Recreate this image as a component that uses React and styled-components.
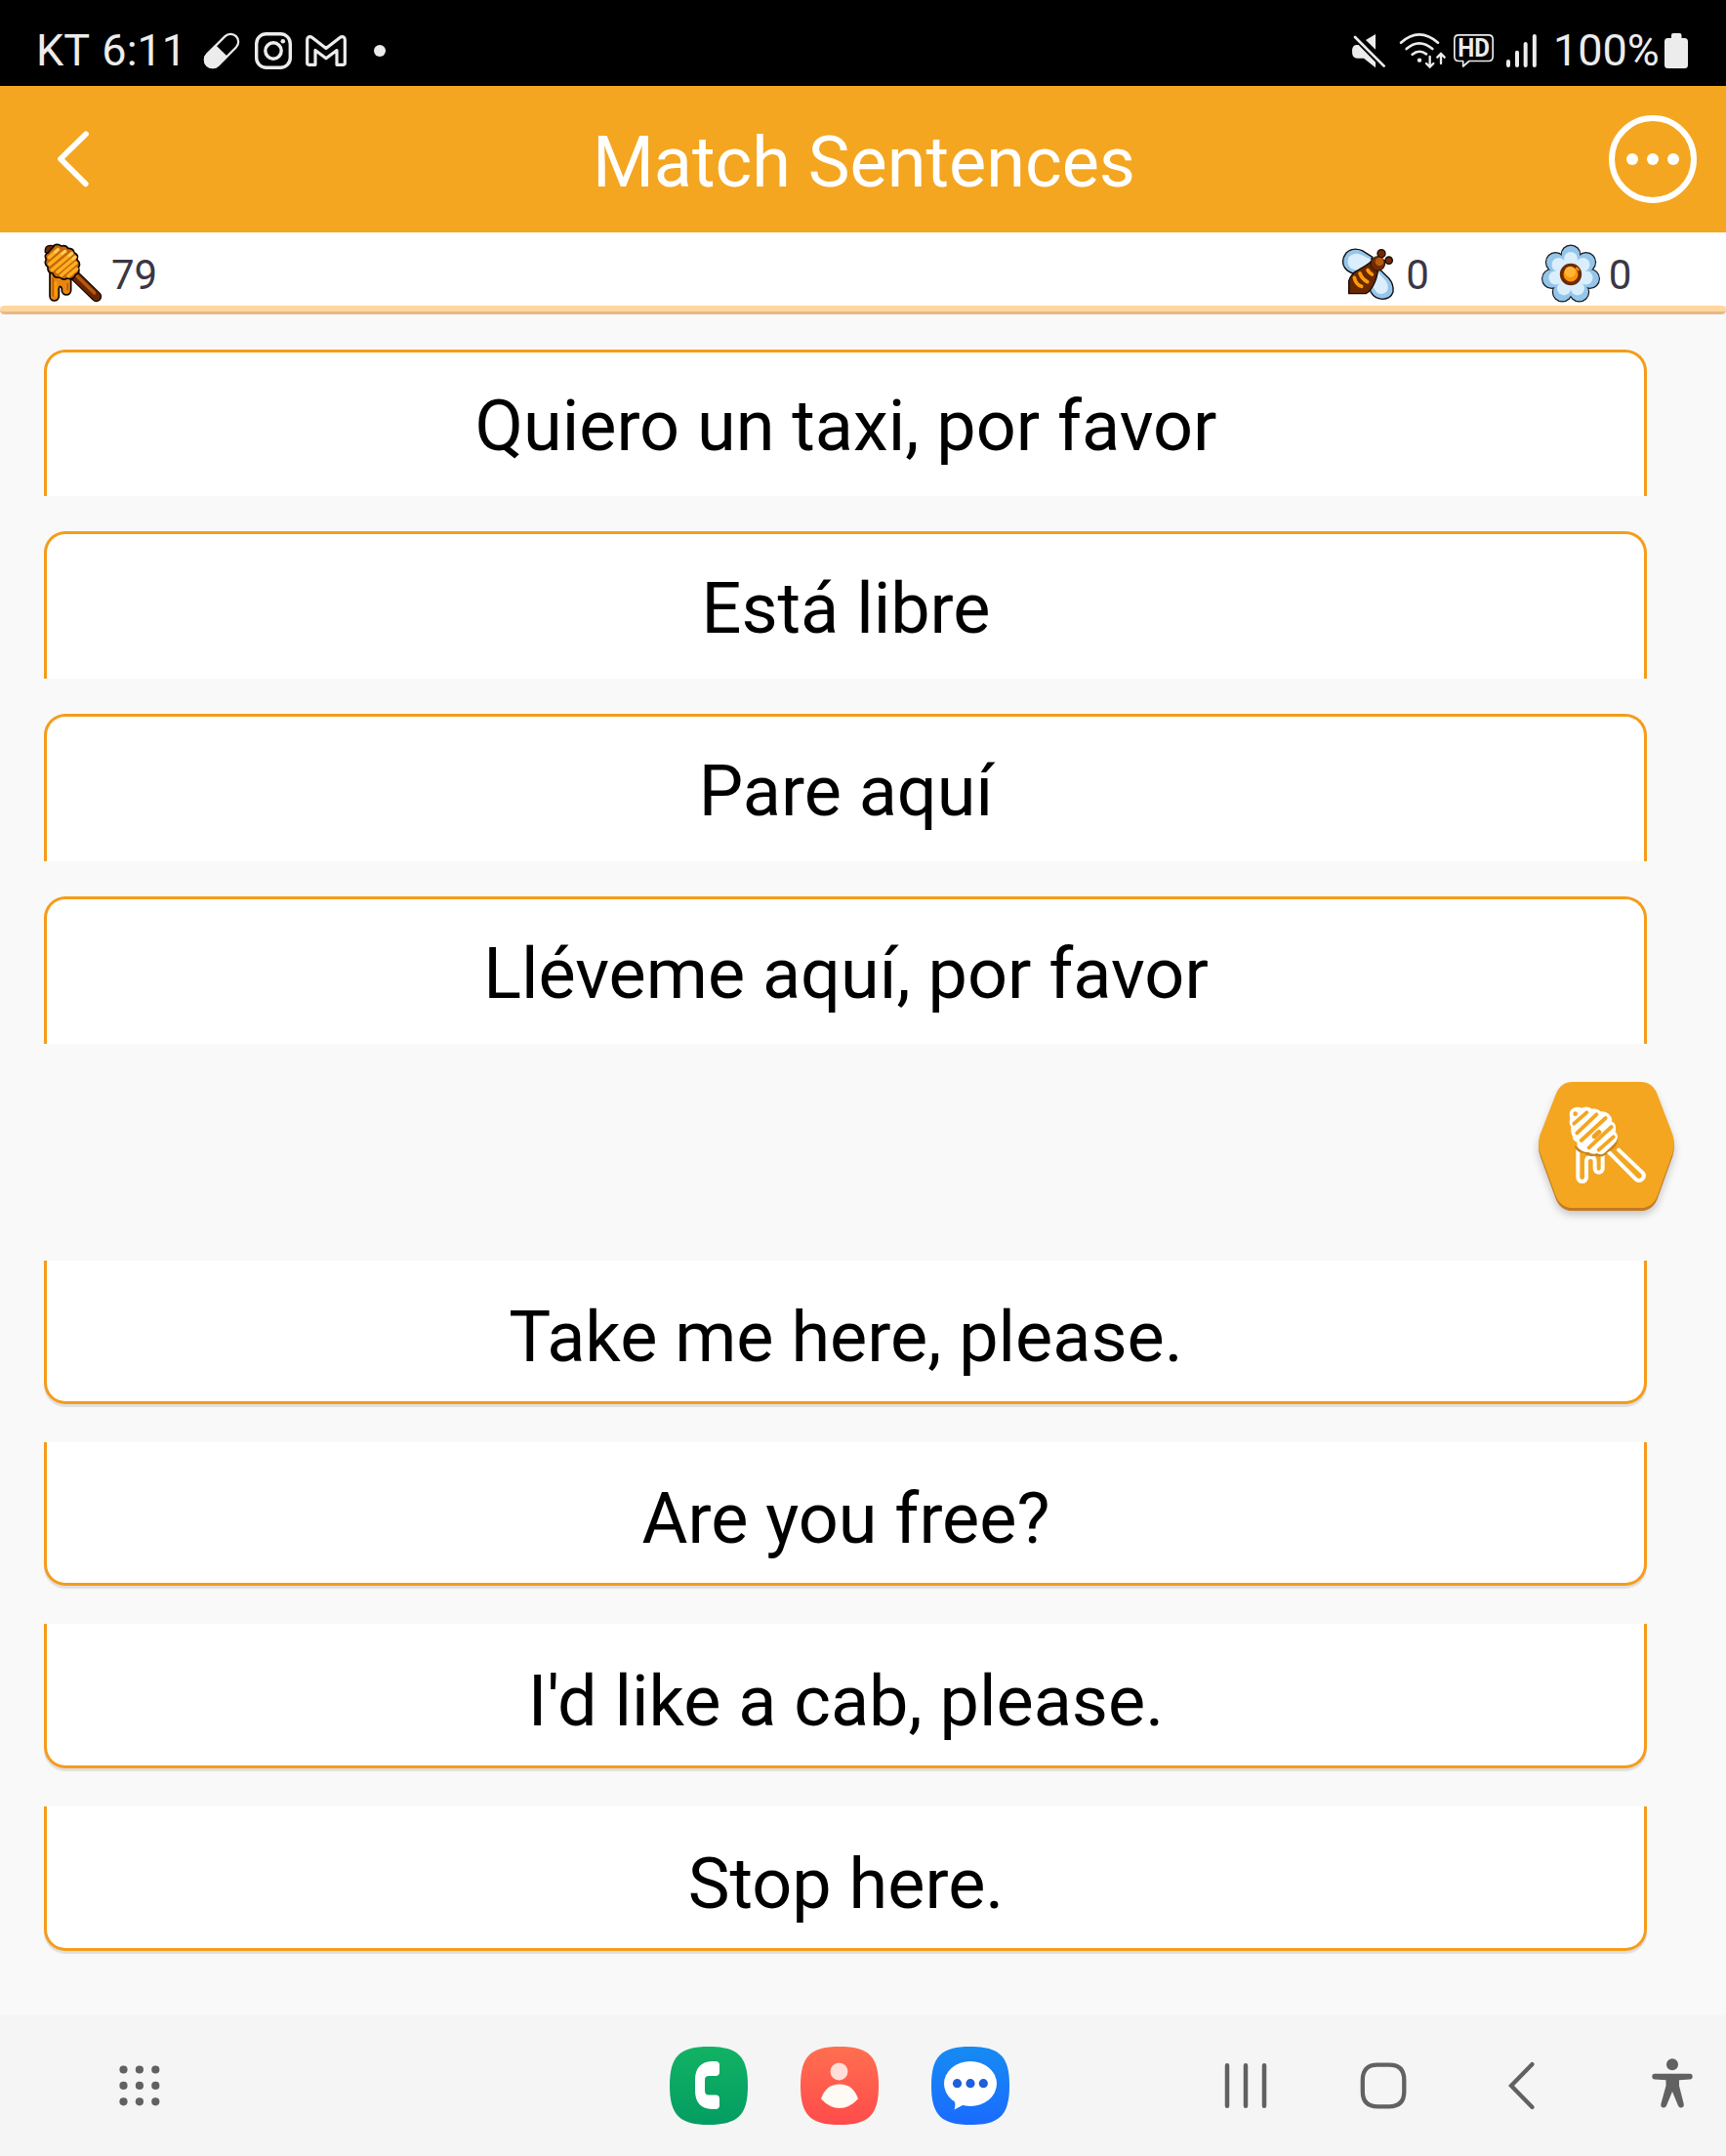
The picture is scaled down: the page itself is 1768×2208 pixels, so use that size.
import React from 'react'
import styled, { createGlobalStyle } from 'styled-components'

const GlobalStyle = createGlobalStyle`
* { box-sizing: border-box; }
body {
  margin: 0;
  background: #f9f9f9;
  font-family: Roboto, "Noto Sans", sans-serif;
}
svg { display: block; flex: none; }
`
const Screen = styled.div`
display: flex;
flex-direction: column;
width: 1768px;
height: 2208px;
overflow: hidden;
background: #f9f9f9;`
const StatusBar = styled.div`
display: flex;
justify-content: space-between;
height: 88px;
padding: 16px 39px 0 37px;
background: #000;
color: #ececec;`
const StatusSide = styled.div`
display: flex;
align-items: center;
height: 72px;`
const StatusText = styled.span`
width: ${({ $width }) => $width}px;
margin-left: ${({ $left }) => $left || 0}px;
font-size: 45px;
line-height: 72px;
word-spacing: 2px;
white-space: nowrap;`
const Icon = styled.svg`
width: ${({ $w }) => $w}px;
height: ${({ $h }) => $h}px;
margin-left: ${({ $left }) => $left || 0}px;
overflow: visible;`
const Header = styled.header`
display: grid;
grid-template-columns: 150px 1fr 150px;
align-items: center;
height: 150px;
background: #f4a620;
color: #fff;`
const IconButton = styled.button`
display: flex;
align-items: center;
justify-content: ${({ $end }) => ($end ? 'flex-end' : 'flex-start')};
height: 150px;
border: 0;
padding: 0 ${({ $end }) => ($end ? 30 : 0)}px 0 ${({ $end }) => ($end ? 0 : 57)}px;
background: none;
color: inherit;`
const Title = styled.h1`
margin: 8px 0 0;
padding-left: 2px;
font-size: 72px;
font-weight: 400;
line-height: 84px;
text-align: center;`
const ScoreRow = styled.div`
display: flex;
align-items: flex-start;
height: 75px;
padding: 12px 98px 0 45px;
background: #fff;`
const Score = styled.div`
display: flex;
align-items: center;
height: 60px;
margin-left: ${({ $left }) => $left || 0}px;`
const ScoreValue = styled.span`
margin: 3px 0 0 ${({ $gap }) => $gap}px;
color: #3b3645;
font-size: 42px;
line-height: 50px;`
const Progress = styled.div`
height: 9px;
border-radius: 5px;
border-bottom: 3px solid #e4b98b;
background: #ffd79c;`
const Cards = styled.div`
display: flex;
flex-direction: column;
gap: ${({ $gap }) => $gap}px;
margin: ${({ $top }) => $top}px 81px 0 45px;`
const Card = styled.div`
display: flex;
align-items: center;
justify-content: center;
height: ${({ $height }) => $height}px;
padding: ${({ $pad }) => $pad}px 0 0 1px;
border: 3px solid #f59c1a;
background: #fff;
color: #000;
font-size: 72px;
line-height: 84px;`
const QuestionCard = styled(Card)`
border-bottom: 0;
border-radius: 22px 22px 0 0;`
const AnswerCard = styled(Card)`
border-top: 0;
border-radius: 0 0 22px 22px;
box-shadow: 0 3px 1px rgba(0, 0, 0, 0.1);`
const HintRow = styled.div`
display: flex;
justify-content: flex-end;
height: 222px;
padding-top: 11px;`
const NavBar = styled.nav`
display: grid;
grid-template-columns: 686px 348px 1fr;
align-items: center;
height: 144px;
margin-top: auto;
background: #f5f5f5;
color: #616161;`
const NavGroup = styled.div`
display: flex;
align-items: center;
padding-left: ${({ $pad }) => $pad || 0}px;
gap: ${({ $gap }) => $gap || 0}px;`

const questions = [
    { text: 'Quiero un taxi, por favor', height: 150, pad: 4 },
    { text: 'Está libre', height: 151, pad: 6 },
    { text: 'Pare aquí', height: 151, pad: 6 },
    { text: 'Lléveme aquí, por favor', height: 151, pad: 6 },
]
const answers = [
    { text: 'Take me here, please.', height: 147, pad: 13 },
    { text: 'Are you free?', height: 147, pad: 13 },
    { text: "I'd like a cab, please.", height: 148, pad: 14 },
    { text: 'Stop here.', height: 148, pad: 14 },
]

const PillIcon = () => (
    <Icon $w={38} $h={38} viewBox="0 0 38 38">
        <g transform="rotate(-45 19 19)">
            <rect x="-2" y="11" width="42" height="16" rx="8" fill="none" stroke="currentColor" strokeWidth="2.2" />
            <path d="M19 10H6a9 9 0 0 0 0 18h13z" fill="currentColor" />
        </g>
    </Icon>
)

const InstagramIcon = () => (
    <Icon $w={38} $h={38} $left={15} viewBox="0 0 38 38" fill="none" stroke="currentColor" strokeWidth="3.4">
        <rect x="1.7" y="1.7" width="34.6" height="34.6" rx="10" />
        <circle cx="19" cy="19" r="8.2" />
        <circle cx="28.8" cy="9.2" r="2.3" fill="currentColor" stroke="none" />
    </Icon>
)

const GmailIcon = () => (
    <Icon $w={42} $h={32} $left={14} viewBox="0 0 42 32" fill="none" stroke="currentColor" strokeWidth="3.2" strokeLinejoin="round">
        <path d="M1.7 4.6C1.7 1.8 4.6.7 6.8 2.4L21 13.4 35.2 2.4C37.4.7 40.3 1.8 40.3 4.6V28.6Q40.3 30.3 38.6 30.3H32V15.5L21 23.8 10 15.5V30.3H3.4Q1.7 30.3 1.7 28.6Z" />
    </Icon>
)

const MuteIcon = () => (
    <Icon $w={34} $h={35} viewBox="132 104 102 105" fill="currentColor">
        <path d="M145 137H152L204 190V207L168 178H148Q132 178 132 157Q132 137 145 137Z" />
        <path d="M204 104V151L174 122Z" />
        <path d="M141 113L230 202" stroke="currentColor" strokeWidth="8" strokeLinecap="round" />
    </Icon>
)

const WifiIcon = () => (
    <Icon $w={47} $h={36} $left={15} viewBox="279 99 141 108" fill="none" stroke="currentColor" strokeWidth="8" strokeLinecap="round">
        <path d="M282 128Q338 78 396 128" />
        <path d="M299 147Q338 113 379 147" />
        <path d="M317 164Q338 147 360 163" />
        <circle cx="339" cy="182" r="6.5" fill="currentColor" stroke="none" />
        <path d="M371 171V201M360 192L371 203 382 192M405 192V163M394 173L405 162 416 173" strokeWidth="7" />
    </Icon>
)

const HdIcon = () => (
    <Icon $w={41} $h={34} $left={8} viewBox="444 107 123 102">
        <path d="M460 109.500H551Q564.500 109.500 564.500 123V176Q564.500 189.500 551 189.500H492L473 206V189.500H460Q446.500 189.500 446.500 176V123Q446.500 109.500 460 109.500Z" fill="none" stroke="currentColor" strokeWidth="5" strokeLinejoin="round" />
        <text x="505.500" y="177" textAnchor="middle" fontSize="75" fontWeight="700" textLength="98" lengthAdjust="spacingAndGlyphs" fill="currentColor">HD</text>
    </Icon>
)

const SignalIcon = () => (
    <Icon $w={31} $h={34} $left={13} viewBox="608 104 93 102" fill="none" stroke="currentColor" strokeWidth="12" strokeLinecap="round">
        <path d="M614 188V200M641 160V200M667 134V200M694.500 110V200" />
    </Icon>
)

const BatteryIcon = () => (
    <Icon $w={24} $h={36} $left={5} viewBox="0 0 24 36" fill="currentColor">
        <path d="M7 2Q7 0 9 0H15.500Q17.500 0 17.500 2V5H20.500Q24 5 24 8.500V32.500Q24 36 20.500 36H3.500Q0 36 0 32.500V8.500Q0 5 3.500 5H7Z" />
    </Icon>
)

const DipperIcon = () => (
    <Icon $w={60} $h={60} viewBox="135 750 180 180" fill="none" strokeLinecap="round" strokeLinejoin="round">
        <path d="M153 835V910A14 14 0 0 0 181 910V886Q184 874 190 886V892A14 14 0 0 0 218 892V850Z" fill="#e8860c" stroke="#0c0400" strokeWidth="5" />
        <path d="M163 855V909M208 872V890" stroke="#b95c0c" strokeWidth="5" />
        <path d="M171 868V907" stroke="#ff9d0e" strokeWidth="8" />
        <path d="M228 845L296 911" stroke="#0c0400" strokeWidth="33" />
        <path d="M228 845L296 911" stroke="#682600" strokeWidth="26" />
        <path d="M235 846L290 900" stroke="#b85812" strokeWidth="10" />
        <path d="M164 755Q178 747 188 756Q203 752 209 763Q226 762 228 776Q243 783 236 797Q250 810 241 822Q247 839 232 844Q224 862 207 855Q193 863 184 852Q166 856 162 840Q145 839 147 820Q134 811 142 797Q134 782 148 776Q152 763 164 755Z" fill="#c5680d" stroke="#0c0400" strokeWidth="5" />
        <path d="M139 775Q137 753 156 754L166 757 146 778Z" fill="#6b2b05" stroke="#0c0400" strokeWidth="4" />
        <path d="M151 791L178 767M152 812L200 772M160 829L221 778M177 836L231 790M188 846L233 808M210 848L236 826" stroke="#ffb01c" strokeWidth="10.5" />
        <path d="M170 774L178 767M191 779L200 772M213 785L221 778M225 795L231 790" stroke="#ffcf62" strokeWidth="8" />
    </Icon>
)

const BeeIcon = () => (
    <Icon $w={60} $h={60} viewBox="90 750 180 180" strokeLinejoin="round" strokeLinecap="round">
        <g stroke="#0b0b10" strokeWidth="4" fill="#95c5e9">
            <path d="M198 790L166 770Q137 758 117 777Q99 800 112 822Q122 836 141 841L172 828Z" />
            <path d="M212 820L248 855Q264 874 261 897Q254 918 228 919Q204 917 193 898L180 865Z" />
        </g>
        <path d="M194 797L162 782Q139 774 125 790Q115 810 131 824L150 832 178 822Z" fill="#daeefc" />
        <path d="M211 832L239 863Q249 878 243 894Q231 909 212 900L196 878Z" fill="#daeefc" />
        <path d="M193 805L215 825Q212 856 199 879Q187 899 177 902H125V863Q133 838 156 828Q174 819 193 805Z" fill="#682800" stroke="#120500" strokeWidth="4" />
        <g fill="none" stroke="#ff9a0b" strokeWidth="11">
            <path d="M142 853Q146 874 164 880" />
            <path d="M159 840Q166 858 182 866" />
            <path d="M183 830Q187 838 196 843" />
        </g>
        <path d="M222 796L226 779M229 804L247 800" stroke="#2b0f00" strokeWidth="7" />
        <circle cx="225" cy="779" r="12" fill="#702b04" stroke="#160600" strokeWidth="4" />
        <circle cx="248" cy="800" r="11" fill="#702b04" stroke="#160600" strokeWidth="4" />
        <circle cx="214" cy="810" r="22" fill="#702b04" stroke="#2b0f00" strokeWidth="3" />
        <circle cx="219" cy="804" r="13" fill="#b75a10" />
    </Icon>
)

const petals = [0, 1, 2, 3, 4, 5, 6].map(i => {
    const a = (i * 2 * Math.PI) / 7 - Math.PI / 2
    return { x: 807 + 60 * Math.cos(a), y: 843 + 60 * Math.sin(a), ix: 807 + 48 * Math.cos(a), iy: 843 + 48 * Math.sin(a) }
})

const FlowerIcon = () => (
    <Icon $w={60} $h={60} viewBox="717 750 180 180">
        {petals.map((p, i) => <circle key={i} cx={p.x} cy={p.y} r="31.500" fill="#101820" />)}
        {petals.map((p, i) => <circle key={i} cx={p.x} cy={p.y} r="28" fill="#95c5e9" />)}
        <circle cx="807" cy="843" r="52" fill="#95c5e9" />
        {petals.map((p, i) => <circle key={i} cx={p.ix} cy={p.iy} r="21" fill="#daeefc" />)}
        <circle cx="807" cy="843" r="46" fill="#daeefc" />
        <circle cx="807" cy="843" r="28" fill="#ff9208" stroke="#6b2a03" strokeWidth="11" />
        <circle cx="805" cy="835" r="17" fill="#ffb437" />
        <path d="M823 822L832 831" stroke="#ff9208" strokeWidth="6" />
    </Icon>
)

const HintButton = () => (
    <Icon $w={228} $h={180} viewBox="0 0 684 540" fill="none" strokeLinecap="round" strokeLinejoin="round">
        <defs>
            <filter id="soft" x="-20%" y="-20%" width="140%" height="150%">
                <feGaussianBlur stdDeviation="12" />
            </filter>
            <path id="hex" d="M212 84H422Q458 84 473 122L520 245Q529 274 520 303L473 434Q458 471 422 471H212Q176 471 161 434L113 303Q103 274 113 245L161 122Q176 84 212 84Z" />
        </defs>
        <use href="#hex" y="20" fill="#000" opacity="0.22" filter="url(#soft)" />
        <use href="#hex" y="9" fill="#c17a22" />
        <use href="#hex" fill="#f4a620" />
        <g stroke="#fff" strokeWidth="12">
            <path d="M229 284V377A13 13 0 0 0 255 377V327Q255 315 268 315Q281 315 281 327V350A12 12 0 0 0 305 350V306" />
            <path d="M318 294L409 385A15 15 0 0 0 429 364L354 293" />
        </g>
        <path d="M223 284Q232 300 250 299Q265 313 282 306Q306 316 318 297Q345 285 348 262" stroke="#c58422" strokeWidth="8" />
        <path d="M213 222Q205 208 210 196Q204 174 218 168Q232 164 240 170Q257 160 270 172Q284 167 298 180Q313 178 323 189Q331 199 328 209Q340 213 340 224Q342 231 338 240Q348 246 345 257Q344 264 337 270L309 297Q299 306 288 297Q276 305 264 294Q247 297 238 286Q229 278 232 266Q215 260 218 251Q211 240 213 222Z" fill="#fff" stroke="#fff" strokeWidth="10" />
        <circle cx="221" cy="182" r="7" fill="#f4a620" />
        <g stroke="#f4a620" strokeWidth="11.500">
            <path d="M217 212L256 178" />
            <path d="M226 241L286 184" />
            <path d="M239 264L314 195" />
            <path d="M263 286L332 222" />
            <path d="M293 293L338 253" />
            <path d="M280 251L293 239" strokeWidth="16" />
        </g>
        <path d="M276 256L297 235" stroke="#c58422" strokeWidth="1.500" />
    </Icon>
)

const squircle = 'M40 0C70 0 80 10 80 40S70 80 40 80 0 70 0 40 10 0 40 0Z'

const AppIcon = ({ id, from, to, children }) => (
    <Icon $w={80} $h={80} viewBox="0 0 80 80">
        <defs>
            <linearGradient id={id} x1="0" y1="0" x2="0" y2="1">
                <stop offset="0" stopColor={from} />
                <stop offset="1" stopColor={to} />
            </linearGradient>
        </defs>
        <path d={squircle} fill={`url(#${id})`} />
        {children}
    </Icon>
)

export default function App() {
    return (
        <Screen>
            <GlobalStyle />
            <StatusBar>
                <StatusSide>
                    <StatusText $width={171}>KT 6:11</StatusText>
                    <PillIcon />
                    <InstagramIcon />
                    <GmailIcon />
                    <Icon $w={12} $h={12} $left={28} viewBox="0 0 12 12">
                        <circle cx="6" cy="6" r="6" fill="currentColor" />
                    </Icon>
                </StatusSide>
                <StatusSide>
                    <MuteIcon />
                    <WifiIcon />
                    <HdIcon />
                    <SignalIcon />
                    <StatusText $width={109} $left={17}>100%</StatusText>
                    <BatteryIcon />
                </StatusSide>
            </StatusBar>
            <Header>
                <IconButton aria-label="Back">
                    <Icon $w={36} $h={60} viewBox="0 0 36 60" fill="none" stroke="currentColor" strokeWidth="5.800" strokeLinecap="round" strokeLinejoin="round">
                        <path d="M31 4.300L5 29.700 30.700 55.300" />
                    </Icon>
                </IconButton>
                <Title>Match Sentences</Title>
                <IconButton $end aria-label="Menu">
                    <Icon $w={90} $h={90} viewBox="0 0 90 90" fill="currentColor">
                        <circle cx="45" cy="45" r="42" fill="none" stroke="currentColor" strokeWidth="6" />
                        <circle cx="24" cy="45" r="6" />
                        <circle cx="45" cy="45" r="6" />
                        <circle cx="66" cy="45" r="6" />
                    </Icon>
                </IconButton>
            </Header>
            <ScoreRow>
                <Score>
                    <DipperIcon />
                    <ScoreValue $gap={9}>79</ScoreValue>
                </Score>
                <Score $left={1209}>
                    <BeeIcon />
                    <ScoreValue $gap={10}>0</ScoreValue>
                </Score>
                <Score $left={115}>
                    <FlowerIcon />
                    <ScoreValue $gap={9}>0</ScoreValue>
                </Score>
            </ScoreRow>
            <Progress />
            <Cards $top={36} $gap={36}>
                {questions.map(q => <QuestionCard key={q.text} $height={q.height} $pad={q.pad}>{q.text}</QuestionCard>)}
            </Cards>
            <HintRow>
                <HintButton />
            </HintRow>
            <Cards $top={0} $gap={39}>
                {answers.map(a => <AnswerCard key={a.text} $height={a.height} $pad={a.pad}>{a.text}</AnswerCard>)}
            </Cards>
            <NavBar>
                <NavGroup $pad={119}>
                    <Icon $w={48} $h={48} viewBox="0 0 48 48" fill="currentColor">
                        {[7.5, 23.9, 40.3].map(y => [7.5, 23.9, 40.3].map(x => <circle key={`${x}-${y}`} cx={x} cy={y} r="4.100" />))}
                    </Icon>
                </NavGroup>
                <NavGroup $gap={54}>
                    <AppIcon id="phone" from="#12b264" to="#039d62">
                        <path d="M43 15H47Q51 15 51 19V26Q51 30 47 30H40Q36 30 36 34V45Q36 49.500 40 49.500H47Q51 49.500 51 53.500V60Q51 64 47 64H43Q26 63 26 45V34Q26 16 43 15Z" fill="#fff" />
                    </AppIcon>
                    <AppIcon id="contacts" from="#ff6f50" to="#ff4b4b">
                        <circle cx="39.500" cy="25.500" r="9" fill="#ffded8" />
                        <path d="M21 53.500Q26 38.500 40 38.500T59 53.500Q50 63 40 63T21 53.500Z" fill="#fffaf3" />
                    </AppIcon>
                    <AppIcon id="messages" from="#168bf2" to="#1a6bff">
                        <ellipse cx="40" cy="38" rx="27" ry="23" fill="#fff" />
                        <path d="M22 54Q26 57 23.500 64.500L34 59Z" fill="#fff" />
                        <g fill="#1f5fd9">
                            <circle cx="26.500" cy="37.700" r="4.600" />
                            <circle cx="40" cy="37.700" r="4.600" />
                            <circle cx="53.300" cy="37.700" r="4.600" />
                        </g>
                    </AppIcon>
                </NavGroup>
                <NavGroup $pad={218} $gap={93}>
                    <Icon $w={48} $h={48} viewBox="0 0 48 48" stroke="currentColor" strokeWidth="4.500" strokeLinecap="round">
                        <path d="M5 3.200V44.800M24 3.200V44.800M43 3.200V44.800" />
                    </Icon>
                    <Icon $w={48} $h={48} viewBox="0 0 48 48" fill="none" stroke="currentColor" strokeWidth="4.300">
                        <path d="M18.500 2.700H30Q45.300 2.700 45.300 18V30Q45.300 45.300 30 45.300H18Q2.800 45.300 2.800 30V18Q2.800 2.700 18 2.700Z" />
                    </Icon>
                    <Icon $w={48} $h={48} viewBox="0 0 48 48" fill="none" stroke="currentColor" strokeWidth="4.300" strokeLinecap="round">
                        <path d="M35.500 2L14 24 35.500 46" />
                    </Icon>
                    <Icon $w={48} $h={48} $left={14} viewBox="0 0 48 48" fill="currentColor">
                        <circle cx="24" cy="2.200" r="6" />
                        <path d="M6 11.700H42Q44.700 11.700 44.700 14.500T42 17.500L31 18.200V24L35.800 43Q36 46 33.500 46.500T30 44.500L24 30 18 44.500Q17 47 14.500 46.500T12.300 43L17.500 24V18.200L6 17.500Q3.300 17.300 3.300 14.500T6 11.700Z" />
                    </Icon>
                </NavGroup>
            </NavBar>
        </Screen>
    )
}
